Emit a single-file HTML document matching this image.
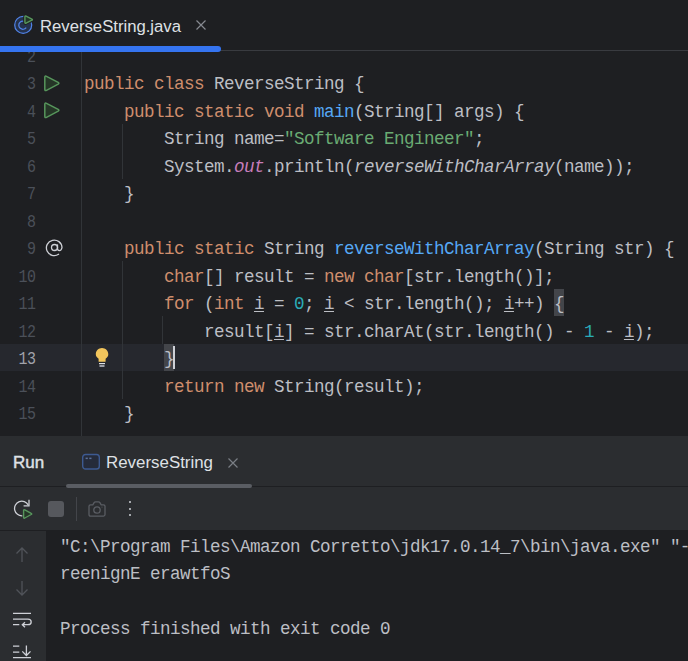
<!DOCTYPE html>
<html><head><meta charset="utf-8">
<style>
*{margin:0;padding:0;box-sizing:border-box}
html,body{width:688px;height:661px;overflow:hidden;background:#1E1F22}
body{position:relative;font-family:"Liberation Sans",sans-serif}
.abs{position:absolute}
#tabbar{left:0;top:0;width:688px;height:52px;background:#1E1F22;z-index:5}
#tabline{left:0;top:50px;width:688px;height:1px;background:#393B40}
#tabul{left:0;top:46px;width:221px;height:6px;background:#3574F0;border-radius:0 3px 3px 0}
#tabtext{left:40px;top:14.8px;font-size:16.7px;line-height:24px;color:#DFE1E5;white-space:pre}
#editor{left:0;top:52px;width:688px;height:384px;overflow:hidden;background:#1E1F22}
.code{position:absolute;left:84px;white-space:pre;font-family:"Liberation Mono",monospace;font-size:17.6px;letter-spacing:-0.56px;line-height:27px;color:#BCBEC4}
.ln{position:absolute;left:0;width:37px;transform:scaleX(0.85);transform-origin:27.5px 0;text-align:right;white-space:pre;font-family:"Liberation Mono",monospace;font-size:17.6px;letter-spacing:-0.56px;line-height:27px;color:#4B5059}
.k{color:#CF8E6D}
.s{color:#6AAB73}
.n{color:#2AACB8}
.f{color:#56A8F5}
.st{color:#C77DBB;font-style:italic}
.it{font-style:italic}
.u{text-decoration:underline;text-underline-offset:2px;text-decoration-thickness:1px}
#run{left:0;top:436px;width:688px;height:225px;background:#2B2D30}
.con{position:absolute;left:60px;white-space:pre;font-family:"Liberation Mono",monospace;font-size:17.6px;letter-spacing:-0.56px;line-height:27px;color:#BCBEC4}
</style></head><body>

<!-- editor -->
<div id="editor" class="abs">
  <!-- current line -->
  <div class="abs" style="left:0;top:292px;width:688px;height:27px;background:#26282E"></div>
  <!-- gutter separator -->
  <div class="abs" style="left:81px;top:0;width:1px;height:384px;background:#313438"></div>
  <!-- indent guides -->
  <div class="abs" style="left:122px;top:72px;width:1px;height:55px;background:#313438"></div>
  <div class="abs" style="left:122px;top:209px;width:1px;height:138px;background:#313438"></div>
  <div class="abs" style="left:162px;top:264px;width:1px;height:28px;background:#313438"></div>
  <!-- matched braces -->
  <div class="abs" style="left:554px;top:237px;width:10px;height:27px;background:#43454A"></div>
  <div class="abs" style="left:164px;top:292px;width:10px;height:27px;background:#43454A"></div>
  <!-- caret -->
  <div class="abs" style="left:173px;top:294px;width:2px;height:23px;background:#CED0D6"></div>

  <div class="ln" style="top:-8px">2</div>
  <div class="ln" style="top:19px">3</div>
  <div class="ln" style="top:47px">4</div>
  <div class="ln" style="top:74px">5</div>
  <div class="ln" style="top:102px">6</div>
  <div class="ln" style="top:129px">7</div>
  <div class="ln" style="top:157px">8</div>
  <div class="ln" style="top:184px">9</div>
  <div class="ln" style="top:212px">10</div>
  <div class="ln" style="top:239px">11</div>
  <div class="ln" style="top:267px">12</div>
  <div class="ln" style="top:294px;color:#A1A3AB">13</div>
  <div class="ln" style="top:322px">14</div>
  <div class="ln" style="top:349px">15</div>


  <div class="code" style="top:19px"><span class="k">public class</span> ReverseString {</div>
  <div class="code" style="top:47px">    <span class="k">public static void</span> <span class="f">main</span>(String[] args) {</div>
  <div class="code" style="top:74px">        String name=<span class="s">"Software Engineer"</span>;</div>
  <div class="code" style="top:102px">        System.<span class="st">out</span>.println(<span class="it">reverseWithCharArray</span>(name));</div>
  <div class="code" style="top:129px">    }</div>
  <div class="code" style="top:184px">    <span class="k">public static</span> String <span class="f">reverseWithCharArray</span>(String str) {</div>
  <div class="code" style="top:212px">        <span class="k">char</span>[] result = <span class="k">new char</span>[str.length()];</div>
  <div class="code" style="top:239px">        <span class="k">for</span> (<span class="k">int</span> <span class="u">i</span> = <span class="n">0</span>; <span class="u">i</span> &lt; str.length(); <span class="u">i</span>++) {</div>
  <div class="code" style="top:267px">            result[<span class="u">i</span>] = str.charAt(str.length() - <span class="n">1</span> - <span class="u">i</span>);</div>
  <div class="code" style="top:294px">        }</div>
  <div class="code" style="top:322px">        <span class="k">return new</span> String(result);</div>
  <div class="code" style="top:349px">    }</div>


  <!-- gutter icons -->
  <svg class="abs" style="left:43px;top:21.7px" width="18" height="19" viewBox="0 0 18 19"><path d="M1.8 3.3 Q1.8 1.4 3.5 2.3 L15.2 8.4 Q16.6 9.3 15.2 10.2 L3.5 16.3 Q1.8 17.2 1.8 15.3 Z" fill="#253627" stroke="#57965C" stroke-width="1.5" stroke-linejoin="round"/></svg>
  <svg class="abs" style="left:43px;top:49.2px" width="18" height="19" viewBox="0 0 18 19"><path d="M1.8 3.3 Q1.8 1.4 3.5 2.3 L15.2 8.4 Q16.6 9.3 15.2 10.2 L3.5 16.3 Q1.8 17.2 1.8 15.3 Z" fill="#253627" stroke="#57965C" stroke-width="1.5" stroke-linejoin="round"/></svg>
  <svg class="abs" style="left:44.7px;top:186px" width="19" height="19" viewBox="0 0 19 19"><circle cx="9.5" cy="9.5" r="3" fill="none" stroke="#CED0D6" stroke-width="1.3"/><path d="M12.5 6.8 V10.5 Q12.5 12.6 14.3 12.6 Q16.5 12.6 17 9.5 A7.8 7.8 0 1 0 13.6 16.3" fill="none" stroke="#CED0D6" stroke-width="1.3" stroke-linecap="round"/></svg>
  <!-- bulb -->
  <svg class="abs" style="left:94px;top:294px" width="16" height="22" viewBox="0 0 16 22"><path d="M8 2.1 C11.5 2.1 14.3 4.9 14.3 8.3 C14.3 10.4 13.2 11.6 11.6 12.8 L11.6 15.8 L4.6 15.8 L4.6 12.8 C3 11.6 1.8 10.4 1.8 8.3 C1.8 4.9 4.5 2.1 8 2.1 Z" fill="#F2C55C"/><rect x="5" y="17" width="6" height="1.2" fill="#DFE1E5"/><rect x="5.5" y="19" width="5" height="2" fill="#9DA0A8"/></svg>
</div>

<!-- tab bar -->
<div id="tabbar" class="abs">
  <div id="tabline" class="abs"></div>
  <div id="tabul" class="abs"></div>
  <svg class="abs" style="left:12px;top:13px" width="24" height="24" viewBox="0 0 24 24">
    <circle cx="11.2" cy="11.9" r="8.5" fill="#25324D" stroke="#5083E8" stroke-width="1.25"/>
    <path d="M13.9 9.4 A4.1 4.1 0 1 0 14.2 14.6" fill="none" stroke="#5083E8" stroke-width="1.25"/>
    <path d="M12.9 4 Q12.9 2.6 14.1 3.2 L19.9 6.1 Q21 6.65 19.9 7.2 L14.1 10.1 Q12.9 10.7 12.9 9.3 Z" fill="#1E1F22" stroke="#1E1F22" stroke-width="3.4" stroke-linejoin="round"/>
    <path d="M12.9 4 Q12.9 2.6 14.1 3.2 L19.9 6.1 Q21 6.65 19.9 7.2 L14.1 10.1 Q12.9 10.7 12.9 9.3 Z" fill="#253627" stroke="#57965C" stroke-width="1.4" stroke-linejoin="round"/>
  </svg>
  <div id="tabtext" class="abs">ReverseString.java</div>
  <svg class="abs" style="left:196px;top:20px" width="10" height="10" viewBox="0 0 10 10"><path d="M0.5 0.5 L9.5 9.5 M9.5 0.5 L0.5 9.5" stroke="#868A91" stroke-width="1.2"/></svg>
</div>

<!-- run tool window -->
<div id="run" class="abs">
  <div class="abs" style="left:13px;top:15.5px;font-size:17px;line-height:22px;color:#DFE1E5;-webkit-text-stroke:0.45px #DFE1E5">Run</div>
  <svg class="abs" style="left:81px;top:17px" width="20" height="18" viewBox="0 0 20 18"><rect x="1.7" y="1.5" width="16.6" height="14.5" rx="2.8" fill="#252B3A" stroke="#3D5A91" stroke-width="1.4"/><rect x="4.6" y="4.6" width="2.2" height="1.5" fill="#5D7198"/><rect x="8.3" y="4.6" width="2.2" height="1.5" fill="#5D7198"/></svg>
  <div class="abs" style="left:106px;top:16px;font-size:16.9px;line-height:22px;color:#DFE1E5;white-space:pre">ReverseString</div>
  <svg class="abs" style="left:228px;top:22px" width="10" height="10" viewBox="0 0 10 10"><path d="M0.5 0.5 L9.5 9.5 M9.5 0.5 L0.5 9.5" stroke="#7A7E85" stroke-width="1.2"/></svg>
  <div class="abs" style="left:0;top:50px;width:688px;height:1px;background:#1E1F22"></div>
  <div class="abs" style="left:66px;top:48px;width:186px;height:4px;background:#5A5D63;border-radius:2px"></div>

  <!-- toolbar -->
  <svg class="abs" style="left:12px;top:62px" width="24" height="24" viewBox="0 0 24 24">
    <path d="M16.2 6.9 A7.3 7.3 0 1 0 10.3 17.8" fill="none" stroke="#CED0D6" stroke-width="1.3"/>
    <path d="M17 1.8 V7.8 H11.6" fill="none" stroke="#CED0D6" stroke-width="1.3"/>
    <path d="M11.6 12.6 Q11.6 11.3 12.8 11.9 L19.2 15.4 Q20.2 15.9 19.2 16.5 L12.8 20 Q11.6 20.6 11.6 19.3 Z" fill="#253627" stroke="#57965C" stroke-width="1.4" stroke-linejoin="round"/>
  </svg>
  <div class="abs" style="left:48px;top:65px;width:16px;height:16px;border-radius:3px;background:#56585D"></div>
  <div class="abs" style="left:76px;top:61px;width:1px;height:24px;background:#43454A"></div>
  <svg class="abs" style="left:87px;top:64px" width="20" height="18" viewBox="0 0 20 18">
    <path d="M2 6.3 Q2 4.9 3.5 4.9 H5.8 L7.1 2.6 Q7.6 1.9 8.5 1.9 H11.5 Q12.4 1.9 12.9 2.6 L14.2 4.9 H16.5 Q18 4.9 18 6.3 V14.6 Q18 16.1 16.5 16.1 H3.5 Q2 16.1 2 14.6 Z" fill="none" stroke="#5A5D63" stroke-width="1.3" stroke-linejoin="round"/><circle cx="15" cy="7" r="0.6" fill="#5A5D63"/>
    <circle cx="10" cy="10" r="3.2" fill="none" stroke="#5A5D63" stroke-width="1.3"/>
  </svg>
  <div class="abs" style="left:129px;top:65px;width:2.4px;height:2.4px;border-radius:1px;background:#CED0D6"></div>
  <div class="abs" style="left:129px;top:71.5px;width:2.4px;height:2.4px;border-radius:1px;background:#CED0D6"></div>
  <div class="abs" style="left:129px;top:78px;width:2.4px;height:2.4px;border-radius:1px;background:#CED0D6"></div>

  <!-- console -->
  <div class="abs" style="left:46px;top:94px;width:642px;height:131px;background:#1E1F22"></div>
  <div class="abs" style="left:0;top:94px;width:46px;height:1px;background:#1E1F22"></div>
  <svg class="abs" style="left:12px;top:108.7px" width="20" height="56" viewBox="0 0 20 56">
    <path d="M10 3 V17 M4.5 8.5 L10 3 L15.5 8.5" fill="none" stroke="#505359" stroke-width="1.3"/>
    <path d="M10 36 V50 M4.5 44.5 L10 50 L15.5 44.5" fill="none" stroke="#505359" stroke-width="1.3"/>
  </svg>
  <svg class="abs" style="left:10px;top:170px" width="24" height="55" viewBox="0 0 24 55">
    <path d="M3 7.4 H21 M3 13.1 H18 Q21.2 13.1 21.2 16 Q21.2 18.7 18 18.7 H12.5 M15 16.2 L12.3 18.7 L15 21.2 M3 18.7 H9.3" fill="none" stroke="#CED0D6" stroke-width="1.3"/>
    <path d="M3 40.2 H9.3 M3 46.2 H9.3 M3 51.7 H21 M16.4 39.5 V49.5 M12.3 45.4 L16.4 49.5 L20.5 45.4" fill="none" stroke="#CED0D6" stroke-width="1.3"/>
  </svg>
  <div class="con" style="top:98px">"C:\Program Files\Amazon Corretto\jdk17.0.14_7\bin\java.exe" "-javaagent</div>
  <div class="con" style="top:125px">reenignE erawtfoS</div>
  <div class="con" style="top:180px">Process finished with exit code 0</div>

</div>
</body></html>
